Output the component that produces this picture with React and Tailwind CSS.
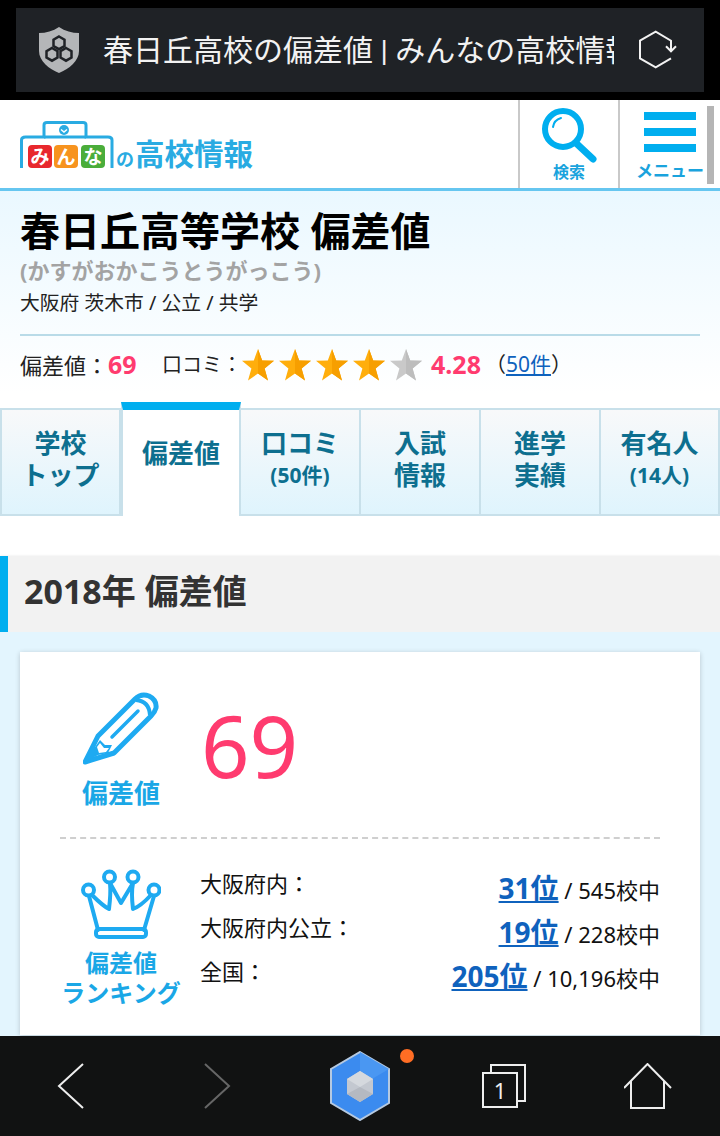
import React from 'react';

const jp = { fontFamily: '"Noto Sans", "Noto Sans CJK JP", sans-serif' };

function Star({ gray }) {
  return (
    <svg width="32" height="32" viewBox="0 0 32 32" className="block">
      <polygon points="16,0 20.2,11.4 32,11.8 22.6,19.4 26,31.5 16,24.6 6,31.5 9.4,19.4 0,11.8 11.8,11.4" fill={gray ? '#c9c9c9' : '#ffae0c'} />
      <polygon points="16,0 20.2,11.4 32,11.8 22.6,19.4 26,31.5 16,24.6" fill={gray ? '#bdbdbd' : '#f79f00'} />
    </svg>
  );
}

function Logo() {
  return (
    <svg width="236" height="52" viewBox="0 0 236 52" className="block">
      <path d="M1.5 47V19Q1.5 16 5.5 16H24V4Q24 1.5 27 1.5H63Q66 1.5 66 4V16H88Q92 16 92 19V47" fill="none" stroke="#29abe2" strokeWidth="3" />
      <path d="M24 16H66" stroke="#29abe2" strokeWidth="3" />
      <circle cx="44" cy="9" r="5" fill="#29abe2" />
      <path d="M41 8.5l3 2.5 3-2.5" fill="none" stroke="#fff" strokeWidth="1.5" />
      <rect x="8" y="24" width="24" height="23" rx="4" fill="#e8282d" />
      <rect x="34" y="24" width="24" height="23" rx="4" fill="#f7931e" />
      <rect x="61" y="24" width="24" height="23" rx="4" fill="#4aad3a" />
      <g fontFamily="Noto Sans CJK JP" fontWeight="700" fontSize="19" fill="#fff" textAnchor="middle">
        <text x="20" y="42.5">み</text>
        <text x="46" y="42.5">ん</text>
        <text x="73" y="42.5">な</text>
      </g>
      <text x="96" y="45" fontFamily="Noto Sans CJK JP" fontWeight="700" fontSize="18" fill="#29abe2">の</text>
      <text x="115" y="44" fontFamily="Noto Sans CJK JP" fontWeight="700" fontSize="29.5" fill="#29abe2">高校情報</text>
    </svg>
  );
}

function Tab({ l1, l2, small, active, width }) {
  if (active) {
    return (
      <div className="-mt-[6px] flex h-[114px] w-[120px] shrink-0 flex-col items-center justify-center border-x-2 border-[#c8e0ea] border-t-[8px] border-t-[#00aeef] bg-white pb-[20px] text-[26px] font-bold text-[#0d6f8f]">
        {l1}
      </div>
    );
  }
  return (
    <div className={`flex h-[108px] shrink-0 flex-col items-center justify-center gap-[1px] border-y-2 border-r-2 border-[#c8e0ea] bg-gradient-to-b from-[#f8f9fa] to-[#dff4fd] pb-[6px] text-[26px] leading-[31px] font-bold text-[#0d6f8f] ${width}`}>
      <span>{l1}</span>
      <span className={small ? 'text-[21px]' : ''}>{l2}</span>
    </div>
  );
}

function RankRow({ label, rank, total }) {
  return (
    <div className="flex h-[44px] items-center justify-between">
      <span className="mb-[10px] text-[22px] text-[#111]">{label}</span>
      <span className="text-[22px] text-[#111]">
        <a className="text-[28px] font-bold text-[#0f62bd] underline">{rank}</a> / {total}
      </span>
    </div>
  );
}

export default function App() {
  return (
    <div className="flex h-[1136px] w-[720px] flex-col overflow-hidden bg-black" style={jp}>
      {/* barra do navegador */}
      <div className="flex h-[100px] shrink-0 items-center bg-black px-4">
        <div className="flex h-[84px] w-full items-center bg-[#1f2226] pl-[23px]">
          <svg width="40" height="46" viewBox="0 0 40 46" className="shrink-0">
            <path d="M20 0C26 4 33 6 40 6V24C40 34 30 42 20 46C10 42 0 34 0 24V6C7 6 14 4 20 0Z" fill="#b4b6b8" />
            <g fill="none" stroke="#1f2226" strokeWidth="2.5">
              <polygon points="20,9.5 25.5,12.7 25.5,19 20,22.2 14.5,19 14.5,12.7" />
              <polygon points="13,21 18.5,24.2 18.5,30.5 13,33.7 7.5,30.5 7.5,24.2" />
              <polygon points="27,21 32.5,24.2 32.5,30.5 27,33.7 21.5,30.5 21.5,24.2" />
            </g>
          </svg>
          <div className="ml-[24px] w-[511px] shrink-0 overflow-hidden text-[30px] whitespace-nowrap text-[#f2f2f2]" style={{ fontFamily: 'Roboto, "Noto Sans CJK JP", sans-serif' }}>春日丘高校の偏差値 | みんなの高校情報</div>
          <svg width="40" height="40" viewBox="0 0 40 40" className="ml-[24px] shrink-0">
            <path d="M33 21V10.7L17.7 1.7 2 10.7V28.3L17.7 37.3 33 28.3M28 16.3L33 21.3 38 16.3" fill="none" stroke="#f2f2f2" strokeWidth="2" />
          </svg>
        </div>
      </div>

      <div className="relative min-h-0 flex-1 overflow-hidden bg-white">
        {/* cabeçalho */}
        <div className="flex h-[91px] border-b-[3px] border-[#66c6f0]">
          <div className="flex flex-1 items-start pt-[21px] pl-[20px]">
            <Logo />
          </div>
          <div className="flex w-[100px] flex-col items-center border-l-2 border-[#c9c9c9] pt-[7px]">
            <svg width="56" height="56" viewBox="0 0 56 56">
              <circle cx="22" cy="22" r="18" fill="none" stroke="#00aeef" strokeWidth="6" />
              <path d="M36 37L52 52" stroke="#00aeef" strokeWidth="7" strokeLinecap="round" />
              <path d="M12 20Q13 13 20 11" fill="none" stroke="#00aeef" strokeWidth="2" strokeLinecap="round" />
            </svg>
            <span className="text-[16px] leading-[18px] font-bold text-[#1aa3dd]">検索</span>
          </div>
          <div className="flex w-[102px] flex-col items-center border-l-2 border-[#c9c9c9] pt-[12px]">
            <div className="flex w-[52px] flex-col gap-[8px]">
              <div className="h-[8px] bg-[#00aeef]" />
              <div className="h-[8px] bg-[#00aeef]" />
              <div className="h-[8px] bg-[#00aeef]" />
            </div>
            <span className="mt-[7px] text-[17px] leading-[24px] font-bold whitespace-nowrap text-[#1aa3dd]">メニュー</span>
          </div>
        </div>
        <div className="absolute top-[6px] right-[6px] h-[78px] w-[7px] bg-[#b5b5b5]" />

        {/* título */}
        <div className="bg-gradient-to-b from-[#eaf8ff] to-white px-5 pt-[15px]">
          <h1 className="text-[40px] leading-[50px] font-bold text-black">春日丘高等学校 偏差値</h1>
          <p className="text-[22px] leading-[28px] font-bold text-[#a3a3a3]">(かすがおかこうとうがっこう)</p>
          <p className="mt-[4px] text-[19.8px] leading-[30px] text-[#222]">大阪府 茨木市 / 公立 / 共学</p>
          <div className="mt-[16px] border-t-2 border-[#b9dbe8]" />
          <div className="flex h-[58px] items-center text-[22px] text-[#222]">
            <span>偏差値：</span>
            <span className="w-[54px] text-[25px] font-bold text-[#ff3b6f]">69</span>
            <span className="text-[20px]">口コミ：</span>
            <div className="flex gap-[5px]">
              <Star />
              <Star />
              <Star />
              <Star />
              <Star gray />
            </div>
            <span className="ml-[9px] text-[25px] font-bold text-[#ff3b6f]">4.28</span>
            <span className="ml-[4px] text-[21px]">（<a className="text-[#0f62bd] underline">50件</a>）</span>
          </div>
        </div>

        {/* abas */}
        <div className="mt-[14px] flex h-[108px] items-start">
          <Tab l1="学校" l2="トップ" width="w-[121px] border-l-2" />
          <Tab l1="偏差値" active />
          <Tab l1="口コミ" l2="(50件)" small width="w-[120px]" />
          <Tab l1="入試" l2="情報" width="w-[120px]" />
          <Tab l1="進学" l2="実績" width="w-[120px]" />
          <Tab l1="有名人" l2="(14人)" small width="w-[119px]" />
        </div>

        <div className="h-[40px]" />

        {/* seção */}
        <h2 className="flex h-[76px] items-center border-l-[8px] border-[#00aeef] bg-[#f2f2f2] pb-[6px] pl-[16px] text-[34px] font-bold text-[#333] shadow-[0_1px_3px_rgba(0,0,0,0.2)]">2018年 偏差値</h2>
        <div className="h-[500px] bg-[#e3f5fe] px-5 pt-[20px]">
          <div className="bg-white px-10 shadow-[0_1px_5px_rgba(0,0,0,0.2)]">
            <div className="flex h-[187px] items-start border-b-2 border-dashed border-[#cfcfcf]">
              <div className="flex w-[122px] flex-col items-center pt-[39px]">
                <svg width="76" height="76" viewBox="0 0 76 76">
                  <path d="M2 71L15 45 52 8Q58 2 66 5 74 9 73 17 72 21 68 25L31 62Z" fill="none" stroke="#1eaaf1" strokeWidth="5" strokeLinejoin="round" />
                  <path d="M53 9Q66 10 67 24" fill="none" stroke="#1eaaf1" strokeWidth="4" />
                  <path d="M29 46L55 20" stroke="#1eaaf1" strokeWidth="3.5" strokeLinecap="round" />
                  <polygon points="2,71 10,52 12,56 17,49 22,54 29,54 25,62 15,64" fill="#1eaaf1" />
                  <polygon points="14,56 17,52 21,57 26,57 23,61 16,62" fill="#fff" />
                </svg>
                <span className="mt-[7px] text-[26px] leading-[38px] font-bold text-[#1aa7e6]">偏差値</span>
              </div>
              <span className="mt-[28px] ml-[19px] text-[85px] leading-[130px] text-[#ff3b6f]">69</span>
            </div>
            <div className="flex h-[196px] pt-[29px]">
              <div className="flex w-[122px] shrink-0 flex-col items-center">
                <svg width="80" height="72" viewBox="0 0 80 72">
                  <g fill="none" stroke="#1eaaf1" strokeWidth="4" strokeLinecap="round" strokeLinejoin="round">
                    <circle cx="7.5" cy="22" r="5.5" />
                    <circle cx="28.5" cy="9" r="5.5" />
                    <circle cx="52" cy="9" r="5.5" />
                    <circle cx="73" cy="22" r="5.5" />
                    <path d="M11 27Q22 38 28 41 30 25 29 15L40 35 52 15Q50 25 52 41 60 38 70 27" />
                    <path d="M8 28L17 62M73 28L63 62" />
                    <rect x="15" y="61" width="50" height="8" rx="3" />
                  </g>
                </svg>
                <span className="mt-[8px] text-[24px] leading-[30px] font-bold text-[#1aa7e6]">偏差値</span>
                <span className="text-[24px] leading-[30px] font-bold whitespace-nowrap text-[#1aa7e6]">ランキング</span>
              </div>
              <div className="-mt-[2px] ml-[18px] flex-1">
                <RankRow label="大阪府内：" rank="31位" total="545校中" />
                <RankRow label="大阪府内公立：" rank="19位" total="228校中" />
                <RankRow label="全国：" rank="205位" total="10,196校中" />
              </div>
            </div>
          </div>
        </div>
      </div>

      {/* navegação inferior */}
      <div className="flex h-[100px] shrink-0 items-center bg-[#111212]">
        <div className="flex w-[142px] justify-center">
          <svg width="28" height="46" viewBox="0 0 28 46"><path d="M26 1L2 23 26 45" fill="none" stroke="#eee" strokeWidth="2" /></svg>
        </div>
        <div className="flex w-[150px] justify-center">
          <svg width="28" height="46" viewBox="0 0 28 46"><path d="M2 1L26 23 2 45" fill="none" stroke="#666" strokeWidth="2" /></svg>
        </div>
        <div className="relative flex w-[136px] justify-center">
          <svg width="62" height="70" viewBox="0 0 62 70">
            <polygon points="31,1 60,18 60,52 31,69 2,52 2,18" fill="#3b8bef" stroke="#b5c9e0" strokeWidth="2" />
            <polygon points="31,1 60,18 31,35" fill="#4a97f2" />
            <polygon points="31,20 44,28 44,43 31,51 18,43 18,28" fill="#c3c8d0" />
            <polygon points="31,20 44,28 31,36 18,28" fill="#d5d9de" />
            <polygon points="31,36 44,43 31,51 18,43" fill="#b4b9c1" />
          </svg>
          <div className="absolute -top-[2px] left-[108px] h-[14px] w-[14px] rounded-full bg-[#ff6d24]" />
        </div>
        <div className="flex w-[152px] justify-center">
          <div className="relative h-[44px] w-[44px]">
            <div className="absolute top-0 right-0 h-[38px] w-[36px] border-2 border-[#eee]" />
            <div className="absolute bottom-0 left-0 flex h-[36px] w-[36px] items-center justify-center border-2 border-[#eee] bg-[#111212] text-[22px] text-[#eee]">1</div>
          </div>
        </div>
        <div className="flex flex-1 justify-center pr-[4px]">
          <svg width="48" height="46" viewBox="0 0 48 46">
            <path d="M0 25L23.5 1 47 25M7 18V45H40V18" fill="none" stroke="#eee" strokeWidth="2" />
          </svg>
        </div>
      </div>
    </div>
  );
}
